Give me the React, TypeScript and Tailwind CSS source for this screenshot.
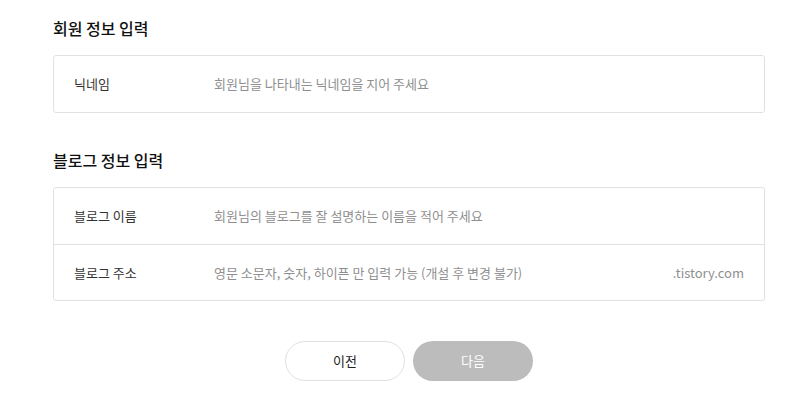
import React from 'react';

const font = { fontFamily: '"Noto Sans CJK KR", "Noto Sans", sans-serif' };

type Row = { label: string; placeholder: string; suffix?: string };

const Section: React.FC<{ title: string; rows: Row[]; className?: string }> = ({ title, rows, className }) => (
  <section className={className}>
    <h2 className="text-[16px] leading-[20px] font-medium text-[#111] mb-[17px]">{title}</h2>
    <div className="border border-[#e1e1e1] rounded-[3px] bg-white">
      {rows.map((row, i) => (
        <div
          key={row.label}
          className={`flex items-center h-[56px] px-5 text-[13px] ${i > 0 ? 'border-t border-[#e1e1e1]' : ''}`}
        >
          <span className="w-[140px] shrink-0 text-[#333]">{row.label}</span>
          <input
            className="flex-1 bg-transparent outline-none text-[#333] placeholder:text-[#8f8f8f]"
            placeholder={row.placeholder}
          />
          {row.suffix && <span className="text-[#8f8f8f]">{row.suffix}</span>}
        </div>
      ))}
    </div>
  </section>
);

export default function App() {
  return (
    <div className="bg-white min-h-screen" style={font}>
      <div className="ml-[53px] w-[712px] pt-[18px]">
        <Section
          title="회원 정보 입력"
          rows={[{ label: '닉네임', placeholder: '회원님을 나타내는 닉네임을 지어 주세요' }]}
        />
        <Section
          className="mt-[37px]"
          title="블로그 정보 입력"
          rows={[
            { label: '블로그 이름', placeholder: '회원님의 블로그를 잘 설명하는 이름을 적어 주세요' },
            { label: '블로그 주소', placeholder: '영문 소문자, 숫자, 하이픈 만 입력 가능 (개설 후 변경 불가)', suffix: '.tistory.com' },
          ]}
        />
        <div className="flex justify-center gap-2 mt-[40px]">
          <button className="w-[120px] h-[40px] rounded-full border border-[#e1e1e1] bg-white text-[13px] text-[#222]">
            이전
          </button>
          <button className="w-[120px] h-[40px] rounded-full bg-[#bcbcbc] text-[13px] text-white">
            다음
          </button>
        </div>
      </div>
    </div>
  );
}
